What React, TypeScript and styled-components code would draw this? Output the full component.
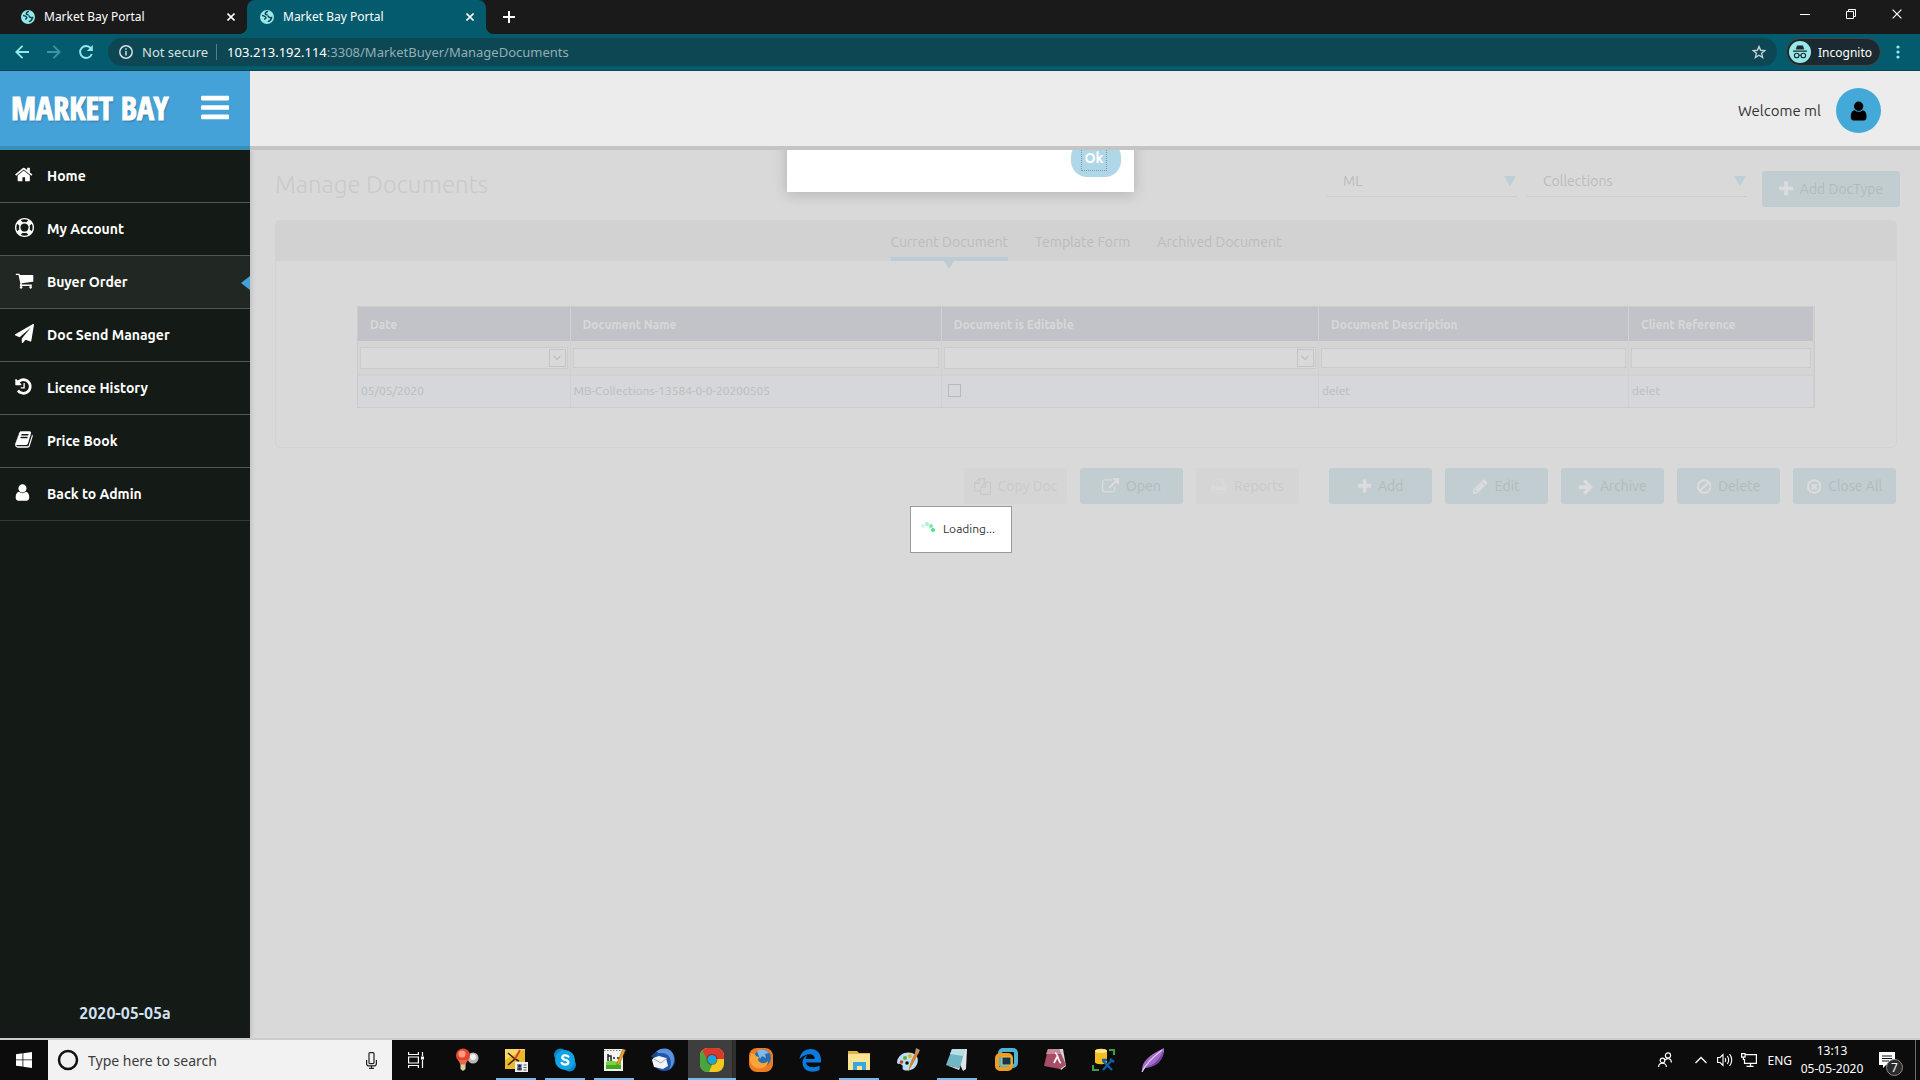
import React from 'react';
import styled, { createGlobalStyle } from 'styled-components';

const GlobalStyle = createGlobalStyle`
  *, *::before, *::after { box-sizing: border-box; }
  body { margin: 0; overflow: hidden; }
  button, input, select { font: inherit; color: inherit; }
  button { cursor: pointer; padding: 0; border: 0; background: none; }
  ul { list-style: none; margin: 0; padding: 0; }
  a { color: inherit; text-decoration: none; }
  svg { display: block; flex: none; }
`;

const uiFont = '"Segoe UI", "Noto Sans", sans-serif';
const siteFont = 'Ubuntu, "Noto Sans", sans-serif';

/* ---------- glyphs: [path, left edge, width] on a 1792-unit grid ---------- */

const glyphs = {
  bars: ['M1664 1344v128q0 26-19 45t-45 19h-1408q-26 0-45-19t-19-45v-128q0-26 19-45t45-19h1408q26 0 45 19t19 45zm0-512v128q0 26-19 45t-45 19h-1408q-26 0-45-19t-19-45v-128q0-26 19-45t45-19h1408q26 0 45 19t19 45zm0-512v128q0 26-19 45t-45 19h-1408q-26 0-45-19t-19-45v-128q0-26 19-45t45-19h1408q26 0 45 19t19 45z', 128, 1536],
  home: ['M1472 992v480q0 26-19 45t-45 19h-384v-384h-256v384h-384q-26 0-45-19t-19-45v-480q0-1 .5-3t.5-3l575-474 575 474q1 2 1 6zm223-69l-62 74q-8 9-21 11h-3q-13 0-21-7l-692-577-692 577q-12 8-24 7-13-2-21-11l-62-74q-8-10-7-23.5t11-21.5l719-599q32-26 76-26t76 26l244 204v-195q0-14 9-23t23-9h192q14 0 23 9t9 23v408l219 182q10 8 11 21.5t-7 23.5z', 70, 1664],
  user: ['M1536 1399q0 109-62.5 187t-150.5 78h-854q-88 0-150.5-78t-62.5-187q0-85 8.5-160.5t31.5-152 58.5-131 94-89 134.5-34.5q131 128 313 128t313-128q76 0 134.5 34.5t94 89 58.5 131 31.5 152 8.5 160.5zm-256-887q0 159-112.5 271.5t-271.5 112.5-271.5-112.5-112.5-271.5 112.5-271.5 271.5-112.5 271.5 112.5 112.5 271.5z', 192, 1408],
  cart: ['M704 1536q0 52-38 90t-90 38-90-38-38-90 38-90 90-38 90 38 38 90zm896 0q0 52-38 90t-90 38-90-38-38-90 38-90 90-38 90 38 38 90zm128-1088v512q0 24-16.5 42.5t-40.5 21.5l-1044 122q13 60 13 70 0 16-24 64h920q26 0 45 19t19 45-19 45-45 19h-1024q-26 0-45-19t-19-45q0-11 8-31.5t16-36 21.5-40 15.5-29.5l-177-823h-204q-26 0-45-19t-19-45 19-45 45-19h256q16 0 28.5 6.5t19.5 15.5 13 24.5 8 26 5.5 29.5 4.5 26h1201q26 0 45 19t19 45z', 0, 1792],
  plane: ['M1764 11q33 24 27 64l-256 1536q-5 29-32 45-14 8-31 8-11 0-24-5l-453-185-242 295q-18 23-49 23-13 0-22-4-19-7-30.5-23.5t-11.5-36.5v-349l864-1059-1069 925-395-162q-37-14-40-55-2-40 32-59l1664-960q15-9 32-9 20 0 36 11z', 0, 1792],
  history: ['M1664 896q0 156-61 298t-164 245-245 164-298 61q-172 0-327-72.5t-264-204.5q-7-10-6.5-22.5t8.5-20.5l137-138q10-9 25-9 16 2 23 12 73 95 179 147t225 52q104 0 198.5-40.5t163.5-109.5 109.5-163.5 40.5-198.5-40.5-198.5-109.5-163.5-163.5-109.5-198.5-40.5q-98 0-188 35.5t-160 101.5l137 138q31 30 14 69-17 40-59 40h-448q-26 0-45-19t-19-45v-448q0-42 40-59 39-17 69 14l130 129q107-101 244.5-156.5t284.5-55.5q156 0 298 61t245 164 164 245 61 298zm-640-288v448q0 14-9 23t-23 9h-320q-14 0-23-9t-9-23v-64q0-14 9-23t23-9h224v-352q0-14 9-23t23-9h64q14 0 23 9t9 23z', 100, 1600],
  ring: ['M896 0q182 0 348 71t286 191 191 286 71 348-71 348-191 286-286 191-348 71-348-71-286-191-191-286-71-348 71-348 191-286 286-191 348-71zm0 128q-190 0-361 90l194 194q82-28 167-28t167 28l194-194q-171-90-361-90zm-678 1129l194-194q-28-82-28-167t28-167l-194-194q-90 171-90 361t90 361zm678 407q190 0 361-90l-194-194q-82 28-167 28t-167-28l-194 194q171 90 361 90zm0-384q159 0 271.5-112.5t112.5-271.5-112.5-271.5-271.5-112.5-271.5 112.5-112.5 271.5 112.5 271.5 271.5 112.5zm484-217l194 194q90-171 90-361t-90-361l-194 194q28 82 28 167t-28 167z', 0, 1792],
  book: ['M1703 478q40 57 18 129l-275 906q-19 64-76.5 107.5t-122.5 43.5h-923q-77 0-148.5-53.5t-99.5-131.5q-24-67-2-127 0-4 3-27t4-37q1-8-3-21.5t-3-19.5q2-11 8-21t16.5-23.5 16.5-23.5q23-38 45-91.5t30-91.5q3-10 .5-30t-.5-28q3-11 17-28t17-23q21-36 42-92t25-90q1-9-2.5-32t.5-28q4-13 22-30.5t22-22.5q19-26 42.5-84.5t27.5-96.5q1-8-3-25.5t-2-26.5q2-8 9-18t18-23 17-21q8-12 16.5-30.5t15-35 16-36 19.5-32 26.5-23.5 36-11.5 47.5 5.5l-1 3q38-9 51-9h761q74 0 114 56t18 130l-274 906q-36 119-71.5 153.5t-128.5 34.5h-869q-27 0-38 15-11 16-1 43 24 70 144 70h923q29 0 56-15.5t35-41.5l300-987q7-22 5-57 38 15 59 43zm-1064 2q-4 13 2 22.5t20 9.5h608q13 0 25.5-9.5t16.5-22.5l21-64q4-13-2-22.5t-20-9.5h-608q-13 0-25.5 9.5t-16.5 22.5zm-83 256q-4 13 2 22.5t20 9.5h608q13 0 25.5-9.5t16.5-22.5l21-64q4-13-2-22.5t-20-9.5h-608q-13 0-25.5 9.5t-16.5 22.5z', 50, 1700],
  plus: ['M1600 736v192q0 40-28 68t-68 28h-416v416q0 40-28 68t-68 28h-192q-40 0-68-28t-28-68v-416h-416q-40 0-68-28t-28-68v-192q0-40 28-68t68-28h416v-416q0-40 28-68t68-28h192q40 0 68 28t28 68v416h416q40 0 68 28t28 68z', 192, 1408],
  pencil: ['M491 1536l91-91-235-235-91 91v107h128v128h107zm523-928q0-22-22-22-10 0-17 7l-542 542q-7 7-7 17 0 22 22 22 10 0 17-7l542-542q7-7 7-17zm-54-192l416 416-832 832h-416v-416zm683 96q0 53-37 90l-166 166-416-416 166-165q36-38 90-38 53 0 91 38l235 234q37 39 37 91z', 128, 1536],
  arrow: ['M1600 960q0 54-37 91l-651 651q-39 37-91 37-51 0-90-37l-75-75q-38-38-38-91t38-91l293-293h-704q-52 0-84.5-37.5t-32.5-90.5v-128q0-53 32.5-90.5t84.5-37.5h704l-293-294q-38-36-38-90t38-90l75-75q38-38 90-38 53 0 91 38l651 651q37 35 37 90z', 64, 1536],
  ban: ['M1440 893q0-161-87-295l-754 753q137 89 297 89 111 0 211.5-43.5t173.5-116.5 116-174.5 43-212.5zm-999 299l755-754q-135-91-300-91-148 0-273 73t-198 199-73 274q0 162 89 299zm1223-299q0 157-61 300t-163.5 246-245 164-298.5 61-298.5-61-245-164-163.5-246-61-300 61-299.5 163.5-245.5 245-164 298.5-61 298.5 61 245 164 163.5 245.5 61 299.5z', 128, 1536],
  close: ['M1225 1111l-146 146q-10 10-23 10t-23-10l-137-137-137 137q-10 10-23 10t-23-10l-146-146q-10-10-10-23t10-23l137-137-137-137q-10-10-10-23t10-23l146-146q10-10 23-10t23 10l137 137 137-137q10-10 23-10t23 10l146 146q10 10 10 23t-10 23l-137 137 137 137q10 10 10 23t-10 23zm215-215q0-148-73-273t-198-198-273-73-273 73-198 198-73 273 73 273 198 198 273 73 273-73 198-198 73-273zm224 0q0 209-103 385.5t-279.5 279.5-385.5 103-385.5-103-279.5-279.5-103-385.5 103-385.5 279.5-279.5 385.5-103 385.5 103 279.5 279.5 103 385.5z', 128, 1536],
  external: ['M1408 928v320q0 119-84.5 203.5t-203.5 84.5h-832q-119 0-203.5-84.5t-84.5-203.5v-832q0-119 84.5-203.5t203.5-84.5h704q14 0 23 9t9 23v64q0 14-9 23t-23 9h-704q-66 0-113 47t-47 113v832q0 66 47 113t113 47h832q66 0 113-47t47-113v-320q0-14 9-23t23-9h64q14 0 23 9t9 23zm384-864v512q0 26-19 45t-45 19-45-19l-176-176-652 652q-10 10-23 10t-23-10l-114-114q-10-10-10-23t10-23l652-652-176-176q-19-19-19-45t19-45 45-19h512q26 0 45 19t19 45z', 0, 1792],
  print: ['M448 1536h896v-256h-896v256zm0-640h896v-384h-160q-40 0-68-28t-28-68v-160h-640v640zm1152 64q0-26-19-45t-45-19-45 19-19 45 19 45 45 19 45-19 19-45zm128 0v416q0 13-9.5 22.5t-22.5 9.5h-224v160q0 40-28 68t-68 28h-960q-40 0-68-28t-28-68v-160h-224q-13 0-22.5-9.5t-9.5-22.5v-416q0-79 56.5-135.5t135.5-56.5h64v-544q0-40 28-68t68-28h672q40 0 88 20t76 48l152 152q28 28 48 76t20 88v256h64q79 0 135.5 56.5t56.5 135.5z', 64, 1664],
  copy: ['M1696 384q40 0 68 28t28 68v1216q0 40-28 68t-68 28h-960q-40 0-68-28t-28-68v-288h-544q-40 0-68-28t-28-68v-672q0-40 20-88t48-76l408-408q28-28 76-48t88-20h416q40 0 68 28t28 68v328q68-40 128-40h416zm-544 213l-299 299h299v-299zm-640-384l-299 299h299v-299zm196 647l316-316v-416h-384v416q0 40-28 68t-68 28h-416v640h512v-256q0-40 20-88t48-76zm956 804v-1152h-384v416q0 40-28 68t-68 28h-416v640h896z', 0, 1792],
} as const;

type GlyphName = keyof typeof glyphs;

const Glyph = ({ name, size }: { name: GlyphName; size: number }) => {
  const [d, x, w] = glyphs[name];
  return (
    <svg height={size} width={(size * w) / 1792} viewBox={`${x} 0 ${w} 1792`} fill="currentColor" aria-hidden>
      <path d={d} />
    </svg>
  );
};

/* ---------- browser chrome ---------- */

const Screen = styled.div`
  display: flex;
  flex-direction: column;
  height: 100vh;
  font-family: ${uiFont};
  background: #d9d9d9;
`;

const TabStrip = styled.div`
  display: flex;
  flex: none;
  height: 34px;
  padding-left: 8px;
  color: #fff;
  background: #1a1a1a;
`;

const BrowserTab = styled.div<{ $active?: boolean }>`
  position: relative;
  display: flex;
  align-items: center;
  gap: 9px;
  width: 239px;
  padding: 0 12px 1px 13px;
  font-size: 12px;
  border-radius: 8px 8px 0 0;
  background: ${(p) => (p.$active ? '#035b6d' : 'transparent')};

  &::before, &::after {
    content: '';
    display: ${(p) => (p.$active ? 'block' : 'none')};
    position: absolute;
    bottom: 0;
    width: 8px;
    height: 8px;
  }
  &::before { left: -8px; background: radial-gradient(circle at 0 0, transparent 8px, #035b6d 8px); }
  &::after { right: -8px; background: radial-gradient(circle at 100% 0, transparent 8px, #035b6d 8px); }
`;

const TabTitle = styled.span`
  flex: 1;
  white-space: nowrap;
`;

const NewTab = styled.button`
  display: grid;
  place-items: center;
  width: 28px;
  margin-left: 9px;
`;

const WindowButtons = styled.div`
  display: flex;
  margin-left: auto;
`;

const WindowButton = styled.button`
  display: grid;
  place-items: center;
  width: 46px;
  height: 28px;
`;

const Toolbar = styled.div`
  display: flex;
  align-items: center;
  flex: none;
  height: 37px;
  padding: 0 20px 0 15px;
  color: #97e8e8;
  background: #035b6d;
  border-bottom: 1px solid #0b4552;
`;

const NavButton = styled.button<{ $faded?: boolean }>`
  width: 14px;
  margin-right: 18px;
  opacity: ${(p) => (p.$faded ? 0.4 : 1)};
`;

const AddressBar = styled.div`
  display: flex;
  align-items: center;
  flex: 1;
  height: 28px;
  margin-left: -3px;
  padding: 0 11px;
  font-size: 13px;
  color: #d5e0e2;
  border-radius: 14px;
  background: #0d4754;
`;

const Security = styled.span`
  margin-left: 9px;
  padding-right: 8px;
  line-height: 16px;
  border-right: 1px solid #557e87;
`;

const Url = styled.span`
  flex: 1;
  margin-left: 10px;
  color: #93aeb4;
  strong { font-weight: 400; color: #fff; }
`;

const Incognito = styled.button`
  display: flex;
  align-items: center;
  gap: 7px;
  height: 28px;
  margin: 0 15px 0 9px;
  padding: 0 8px 0 2px;
  font-size: 12px;
  color: #fff;
  border: 1px solid #43484b;
  border-radius: 14px;
  background: #1b2a31;
`;

/* ---------- site ---------- */

const SiteHeader = styled.header`
  display: flex;
  flex: none;
  height: 79px;
  font-family: ${siteFont};
  background: #ececec;
  border-bottom: 4px solid #c4c4c4;
`;

const Brand = styled.div`
  display: flex;
  align-items: center;
  justify-content: space-between;
  width: 250px;
  height: 79px;
  padding: 0 21px 2px 11px;
  color: #fff;
  background: #45a2d9;
  border-bottom: 4px solid #368fb8;
`;

const BrandName = styled.a`
  font: 700 32px/36px Impact, "Open Sans Condensed", "Liberation Sans Narrow", "Liberation Sans", sans-serif;
  white-space: nowrap;
  -webkit-text-stroke: 1px #fff;
  text-shadow: 1px 2px 2px rgba(0, 0, 0, 0.2);
`;

const Account = styled.div`
  display: flex;
  align-items: center;
  gap: 15px;
  margin-left: auto;
  padding: 4px 39px 0 0;
  font-size: 15px;
  color: #333;
`;

const Avatar = styled.button`
  display: grid;
  place-items: center;
  width: 45px;
  height: 45px;
  color: #000;
  border-radius: 50%;
  background: #42a9d9;
`;

const SiteBody = styled.div`
  position: relative;
  display: flex;
  flex: 1;
  min-height: 0;
  overflow: hidden;
  font-family: ${siteFont};
  border-bottom: 2px solid #cbcbd0;
`;

const Sidebar = styled.nav`
  display: flex;
  flex-direction: column;
  flex: none;
  width: 250px;
  color: #fff;
  background: #141a16;
  box-shadow: 1px 0 5px rgba(0, 0, 0, 0.15);
`;

const MenuLink = styled.a<{ $active?: boolean }>`
  position: relative;
  display: grid;
  grid-template-columns: 32px 1fr;
  align-items: center;
  height: 53px;
  padding-left: 15px;
  font-size: 14px;
  font-weight: 600;
  background: ${(p) => (p.$active ? '#212723' : 'transparent')};
  border-bottom: 1px solid #4e5955;

  svg { margin-bottom: 3px; }

  &::after {
    content: '';
    display: ${(p) => (p.$active ? 'block' : 'none')};
    position: absolute;
    right: 0;
    top: 20px;
    border: solid transparent;
    border-width: 7px 9px 7px 0;
    border-right-color: #45a2d9;
  }
`;

const MenuItem = styled.li`
  &:last-child a { border-bottom-color: #33383c; }
`;

const Version = styled.p`
  margin: auto 0 14px;
  font-size: 16px;
  line-height: 22px;
  font-weight: 600;
  text-align: center;
  color: #d3e3f3;
`;

const Main = styled.main`
  flex: 1;
  min-width: 0;
  padding: 16px 20px 0 25px;
  color: #bcbcbc;
`;

const TitleRow = styled.div`
  display: flex;
  align-items: flex-start;
  height: 54px;
`;

const Title = styled.h1`
  flex: 1;
  margin: 0;
  font-size: 24px;
  line-height: 38px;
  font-weight: 300;
  color: #cacaca;
`;

const Picker = styled.label<{ $width: number }>`
  display: flex;
  align-items: center;
  width: ${(p) => p.$width}px;
  height: 31px;
  margin-right: 10px;
  padding: 0 1px 0 16px;
  font-size: 14px;
  border-bottom: 1px solid #cdcdcd;

  select {
    flex: 1;
    min-width: 0;
    padding: 0;
    border: 0;
    appearance: none;
    background: none;
  }
  &::after {
    content: '';
    border: solid transparent;
    border-width: 10px 6px 0;
    border-top-color: #bccfd6;
  }
`;

const ActionButton = styled.button<{ $wide?: boolean; $pale?: boolean }>`
  display: flex;
  align-items: center;
  justify-content: center;
  gap: 7px;
  width: ${(p) => (p.$wide ? 138 : 103)}px;
  height: 36px;
  font-size: 14px;
  color: #b5babb;
  border-radius: 3px;
  background: #c1cdd1;
  white-space: nowrap;

  svg { color: #dcdcdc; }
  &:disabled {
    color: #cacaca;
    background: #d5d5d5;
  }
  &:disabled svg { color: ${(p) => (p.$pale ? '#dadada' : '#c8c8c8')}; }
`;

const AddTypeSlot = styled.div`
  padding: 5px 0 0 5px;
`;

const Panel = styled.section`
  margin-right: 3px;
  border: 1px solid #d2d2d2;
  border-radius: 6px;
`;

const PanelTabs = styled.div`
  display: flex;
  justify-content: center;
  gap: 27px;
  height: 40px;
  background: #d2d2d2;
`;

const PanelTab = styled.button<{ $active?: boolean }>`
  position: relative;
  padding-top: 5px;
  font-size: 14px;
  color: #bcbcbc;
  border-bottom: 4px solid ${(p) => (p.$active ? '#becbd4' : 'transparent')};

  &::after {
    content: '';
    display: ${(p) => (p.$active ? 'block' : 'none')};
    position: absolute;
    top: 40px;
    left: calc(50% - 5px);
    border: solid transparent;
    border-width: 8px 5px 0;
    border-top-color: #becbd4;
  }
`;

const GridWrap = styled.div`
  padding: 45px 81px 39px;
`;

const DataTable = styled.table`
  width: 100%;
  table-layout: fixed;
  border-collapse: separate;
  border-spacing: 0;
  border: 1px solid #cbcbcb;
  font-size: 12px;
  color: #bcbcbc;
`;

const HeadCell = styled.th<{ $share: number }>`
  width: ${(p) => p.$share}%;
  height: 34px;
  padding: 0 12px;
  text-align: left;
  font-weight: 600;
  color: #d8d8d8;
  background: #c2c3c8;
  border-right: 1px solid #d2d2d4;
`;

const FilterCell = styled.td`
  height: 35px;
  padding: 0 2px;
  background: #d5d5d5;
  border-right: 1px solid #cfd0d1;
  border-bottom: 2px solid #d1d1d1;
`;

const FilterBox = styled.div<{ $drop?: boolean }>`
  display: flex;
  height: ${(p) => (p.$drop ? 22 : 20)}px;
  padding: 1px;
  border: 1px solid #cbcbcb;
  background: #d9d9d9;

  input, select {
    flex: 1;
    min-width: 0;
    padding: 0 4px;
    border: 0;
    outline: 0;
    appearance: none;
    background: none;
  }
`;

const DropMark = styled.span`
  display: grid;
  place-items: center;
  width: 17px;
  color: #bebebe;
  border: 1px solid #c4c4c4;
`;

const DataCell = styled.td`
  height: 31px;
  padding: 0 3px 2px;
  line-height: 16px;
  background: #d5d7da;
  border-right: 1px solid #cfd0d1;

  input {
    appearance: none;
    display: block;
    width: 13px;
    height: 13px;
    margin: 0 0 0 3px;
    border: 1px solid #b9b9b9;
  }
`;

const Actions = styled.div`
  display: flex;
  justify-content: flex-end;
  gap: 30px;
  margin: 20px 4px 0 0;
`;

const ActionGroup = styled.div`
  display: flex;
  gap: 13px;
`;

const Dialog = styled.div`
  position: absolute;
  top: -80px;
  left: 50%;
  display: flex;
  align-items: flex-end;
  justify-content: flex-end;
  width: 347px;
  height: 122px;
  margin-left: -173px;
  padding: 0 13px 15px;
  background: #fff;
  box-shadow: 0 2px 14px rgba(0, 0, 0, 0.18);
`;

const OkButton = styled.button`
  width: 50px;
  height: 36px;
  padding: 0 14px 2px 10px;
  font-size: 14px;
  font-weight: 700;
  color: #fff;
  border-radius: 16px;
  background: #b0d7e8;

  span {
    display: block;
    line-height: 24px;
    border: 1px dotted #7d98a3;
  }
`;

const Loading = styled.div`
  position: absolute;
  top: 356px;
  left: 50%;
  display: flex;
  align-items: center;
  gap: 6px;
  width: 102px;
  height: 47px;
  margin-left: -50px;
  padding: 0 0 2px 10px;
  font-size: 12px;
  color: #333;
  background: #fff;
  border: 1px solid #9a9a9a;
`;

/* ---------- taskbar ---------- */

const Taskbar = styled.footer`
  display: flex;
  flex: none;
  height: 40px;
  color: #fff;
  background: #0c0c0c;
`;

const StartButton = styled.button`
  display: grid;
  place-items: center;
  width: 48px;
`;

const SearchBox = styled.label`
  display: flex;
  align-items: center;
  gap: 9px;
  width: 344px;
  padding: 0 15px 0 9px;
  font-size: 14px;
  color: #3c3c3c;
  background: #f2f2f2;

  input {
    flex: 1;
    min-width: 0;
    padding: 0;
    border: 0;
    outline: 0;
    background: none;
  }
  input::placeholder { color: #3c3c3c; opacity: 1; }
`;

const TaskButton = styled.button<{ $open?: boolean; $current?: boolean }>`
  display: grid;
  place-items: center;
  width: ${(p) => (p.$current ? 48 : 40)}px;
  margin: ${(p) => (p.$current ? '0 -4px 0 5px' : '0 0 0 9px')};
  padding-top: ${(p) => (p.$open ? 2 : 0)}px;
  border-bottom: ${(p) => (p.$open ? '2px solid #76b9ed' : '0')};
  background: ${(p) => (p.$current ? 'linear-gradient(90deg, #3e3e3e 44px, #222 44px, #2f2f2f 45px)' : 'none')};
`;

const TaskView = styled(TaskButton)`
  margin: 0 0 0 4px;
`;

const TaskList = styled.div`
  display: flex;
  margin-left: 2px;
`;

const Tray = styled.div`
  display: flex;
  align-items: center;
  margin-left: auto;
  font-size: 12px;
`;

const TrayButton = styled.button<{ $gap: number }>`
  margin-right: ${(p) => p.$gap}px;
`;

const Clock = styled.div`
  width: 64px;
  margin-right: 15px;
  line-height: 18px;
  text-align: center;
`;

const Notices = styled.button`
  position: relative;
  width: 26px;
  margin-right: 10px;
`;

const NoticeCount = styled.span`
  position: absolute;
  left: 7px;
  top: 7px;
  width: 17px;
  height: 17px;
  font-size: 12px;
  line-height: 15px;
  border: 1px solid #8a8a8a;
  border-radius: 50%;
  background: #2b2b2b;
`;

const ShowDesktop = styled.button`
  align-self: stretch;
  width: 5px;
  border-left: 1px solid #6d6d6d;
`;

/* ---------- small drawings ---------- */

const Globe = () => (
  <svg width="14" height="14" viewBox="0 0 14 14" aria-hidden>
    <circle cx="7" cy="7" r="7" fill="#97e8e8" />
    <path d="M8 1.600C6 1.800 4.800 3 5.400 4.200L7.600 5M2 5.600c1.600 0 2.600.6 3.600 1.400M8.200 5.400c-.4 1.600 1 2.400 3.400 2.200-.4 2-1.800 3.400-3.800 4M5.600 7c.8 1.400-.4 2-1.400 2.200" fill="none" stroke="#0d4754" strokeWidth="1.500" />
  </svg>
);

const Cross = ({ size = 8, width = 1.6 }: { size?: number; width?: number }) => (
  <svg width={size} height={size} viewBox="0 0 8 8" stroke="#fff" strokeWidth={width} aria-hidden>
    <path d="M.5.5l7 7M7.5.5l-7 7" />
  </svg>
);

const Chevron = () => (
  <svg width="8" height="6" viewBox="0 0 8 6" fill="none" stroke="currentColor" strokeWidth="1.3" aria-hidden>
    <path d="M.7 1 4 4.6 7.3 1" />
  </svg>
);

const Spinner = () => (
  <svg width="16" height="16" viewBox="0 0 16 16" fill="#4be08e" aria-hidden>
    <circle cx="2" cy="5" r="2" opacity=".25" />
    <circle cx="6" cy="3" r="2" opacity=".45" />
    <circle cx="10" cy="5" r="2" opacity=".75" />
    <circle cx="12" cy="9" r="2" />
  </svg>
);

const I = ({ children }: { children: React.ReactNode }) => (
  <svg width="24" height="24" viewBox="0 0 24 24" aria-hidden>{children}</svg>
);

const tasks: { name: string; open?: boolean; current?: boolean; art: React.ReactNode }[] = [
  { name: 'Hints', art: <I>
    <circle cx="18" cy="10" r="5.500" fill="#b9b9b9" /><circle cx="18" cy="9" r="3" fill="#f2f2f2" />
    <circle cx="8" cy="7.500" r="7" fill="#e2472d" /><circle cx="7" cy="6" r="3.600" fill="#ff9c82" />
    <path d="M3.500 12h9l-2 5h-5z" fill="#e8694a" /><path d="M5.500 16.500h5V21L8 23l-2.500-2z" fill="#d9cf9c" /></I> },
  { name: 'Organizer', open: true, art: <I>
    <path d="M1 1h20v20H1z" fill="#e9b92c" /><path d="M1 1h20L1 12z" fill="#f5d867" />
    <path d="m4 5 7 6M4 17l7-6 4 2" stroke="#30230a" strokeWidth="1.500" fill="none" /><path d="m11 11 5-9" stroke="#e5352b" strokeWidth="1.800" />
    <path d="M11 14h13v10H11z" fill="#f1f1f1" /><path d="M13 16h5v6h-5z" fill="#8098b5" /><circle cx="15.500" cy="18" r="1.500" fill="#1d2b40" /><path d="M13.500 22c0-3 4-3 4 0zM19.500 17h3M19.500 19.500h3M19.500 22h3" stroke="#555" fill="#1d2b40" /></I> },
  { name: 'Skype', open: true, art: <I>
    <circle cx="7.500" cy="7" r="6.500" fill="#0a87c9" /><circle cx="16.500" cy="17" r="6.500" fill="#0a87c9" /><circle cx="12" cy="12" r="10" fill="#12a5e6" />
    <path d="M15.300 8.600C14 7 9.300 6.800 9.300 9.500c0 3.200 6 1.600 6 4.800 0 2.900-5 2.800-6.600.7" stroke="#fff" strokeWidth="2.300" fill="none" strokeLinecap="round" /></I> },
  { name: 'Notes', open: true, art: <I>
    <path d="M2 1h19v22H2z" fill="#f4f4f0" /><path d="M4 14c5-3 10 1 15-1v8H4z" fill="#7ed043" /><path d="M4 17h15v4H4z" fill="#3fab1c" />
    <path d="M2 2.500h18" stroke="#777" strokeDasharray="1.500 1.500" /><path d="M6 6v7M6 8h3v5M11 10h2M15 10h3" stroke="#222" strokeWidth="1.500" fill="none" />
    <path d="m15 15 6-14 2.500 1-6 13.500-2.500 2z" fill="#efa62c" stroke="#8a5a12" strokeWidth=".6" /></I> },
  { name: 'Thunderbird', art: <I>
    <circle cx="13" cy="12" r="11" fill="#2256a8" /><path d="M4 5C9-1 19-1 22 6c2 5 1 12-4 16 3-5 3-13-3-16C11 4 7 6 4 5z" fill="#5b93dc" />
    <path d="M1 12c2-3 4-3 7-4l7 2 2 8-5 3-9-2z" fill="#f3f5f8" /><path d="m3 11 7 4 6-5" stroke="#9aa8bb" fill="none" /><path d="M0 9c1-3 4-5 7-5L5 9z" fill="#1c4588" /></I> },
  { name: 'Chrome', current: true, open: true, art: <I>
    <rect x="0" y="0" width="24" height="24" rx="8" fill="#f4c91d" />
    <path d="M2 3C4 0 7 0 9 0h7c5 0 8 3 8 8v3H12L7 13z" fill="#d93a30" /><path d="M2.500 3 8 13l4 4-3 7H8c-5 0-8-3-8-8V8c0-2 1-4 2.500-5z" fill="#4aa53c" />
    <circle cx="12" cy="11.500" r="5.500" fill="#222" opacity=".5" /><circle cx="12" cy="11.500" r="4.500" fill="#19a6de" /></I> },
  { name: 'Firefox', art: <I>
    <rect width="24" height="24" rx="8" fill="#ee7b22" /><circle cx="13.500" cy="10" r="8.500" fill="#2a6cb0" /><path d="M8 3c4-3 10-1 12 2l-4 1 1 4-4-2-2 3z" fill="#7fb9e6" />
    <path d="M2 5c2 0 4 1 5 3l3 1-1 3c2 4 7 4 10 1 0 5-5 8-10 7-5 0-8-5-8-9z" fill="#f9a53a" /></I> },
  { name: 'Edge', art: <I>
    <path d="M1.500 11C2.500 4.500 7 1 12.500 1 19 1 23 5.500 23 12v2.500H8c.3 5 8.500 6 13.500 3V22c-7 3.500-17 1.500-17-7.500 0-3.500 2-6 5-7.500-1 1-1.600 2.400-1.800 4h9C17 5 8 4.500 1.500 11z" fill="#0a7bdc" /></I> },
  { name: 'File Explorer', open: true, art: <I>
    <path d="M1 3h9l2 2h11v17H1z" fill="#e3b341" /><path d="M1 6h22v16H1z" fill="#fde394" /><path d="M6 22v-8h13v8h-4v-4h-5v4z" fill="#35a8e0" /></I> },
  { name: 'Paint', art: <I>
    <path d="M1 14C2 6 10 3 16 5c7 2 7 9 4 13-3 5-10 5-12 4-3-1 0-4-2-5-2-2-5 0-5-3z" fill="#b9dff0" />
    <circle cx="9" cy="10" r="2" fill="#59b23c" /><circle cx="14" cy="8" r="2" fill="#e0b52d" /><circle cx="5.500" cy="14" r="1.800" fill="#cf3b2e" /><circle cx="11" cy="15" r="1.800" fill="#111" />
    <path d="m12 24 3-11 5-10 3 1-5 10z" fill="#d9812a" /><path d="m19 5 1-5 4 2-2 4z" fill="#b99265" /></I> },
  { name: 'Notepad', open: true, art: <I>
    <path d="M8 1h14l-1 20-3 2z" fill="#dfe5e6" /><path d="M7 1h13l-5 19-14-3z" fill="#6fb7c4" /><path d="M7 1h13l-2 7L5 6z" fill="#b9dfe4" /><path d="m1 17 14 3-1 2z" fill="#d5dcde" /></I> },
  { name: 'Virtual machines', art: <I>
    <rect x="6" y="2" width="16" height="16" rx="3" fill="none" stroke="#4fb3d6" strokeWidth="4" /><rect x="3" y="7" width="14" height="14" rx="3" fill="none" stroke="#f09d1e" strokeWidth="4" /><path d="M8 9h9v8H8z" fill="#173445" stroke="#e8c24d" /></I> },
  { name: 'Console', art: <I>
    <path d="M8 1h12l3 17-5 4z" fill="#d8d4d6" /><path d="M5 1h11l7 16-6 4L1 18z" fill="#a74d66" /><path d="M5 1h11l2 5H3z" fill="#c98a9a" /><path d="M12 5c3 0 3 9 6 10M14 9l-3 6" stroke="#fff" strokeWidth="1.700" fill="none" /></I> },
  { name: 'Database tools', art: <I>
    <path d="M3 3c0-3 12-3 12 0v11c0 3-12 3-12 0z" fill="#f3bd24" /><ellipse cx="9" cy="3" rx="6" ry="2" fill="#ffe58b" />
    <path d="M17 2h5v5M1 17v5h6" stroke="#3f9b45" strokeWidth="2.200" fill="none" /><path d="m11 22 9-10M11 13l9 9M10 12h5M18 11l4 3" stroke="#0f5fa6" strokeWidth="2.400" fill="none" /></I> },
  { name: 'Feather', art: <I>
    <path d="M1 24C0 14 8 7 23 0c1 9-6 19-19 20z" fill="#a56cc9" /><path d="M5 19c9-2 15-9 17-17 1 9-6 18-17 17z" fill="#7b3fa5" /><path d="M1 24C5 15 12 9 21 2" stroke="#e3cdf0" strokeWidth="1.200" fill="none" /></I> },
];

const menu: { label: string; icon: GlyphName; active?: boolean }[] = [
  { label: 'Home', icon: 'home' },
  { label: 'My Account', icon: 'ring' },
  { label: 'Buyer Order', icon: 'cart', active: true },
  { label: 'Doc Send Manager', icon: 'plane' },
  { label: 'Licence History', icon: 'history' },
  { label: 'Price Book', icon: 'book' },
  { label: 'Back to Admin', icon: 'user' },
];

const columns: { label: string; share: number; drop?: 'date' | 'list' }[] = [
  { label: 'Date', share: 14.6, drop: 'date' },
  { label: 'Document Name', share: 25.5 },
  { label: 'Document is Editable', share: 25.9, drop: 'list' },
  { label: 'Document Description', share: 21.3 },
  { label: 'Client Reference', share: 12.7 },
];

const actionGroups: { label: string; icon: GlyphName; off?: boolean }[][] = [
  [
    { label: 'Copy Doc', icon: 'copy', off: true },
    { label: 'Open', icon: 'external' },
    { label: 'Reports', icon: 'print', off: true },
  ],
  [
    { label: 'Add', icon: 'plus' },
    { label: 'Edit', icon: 'pencil' },
    { label: 'Archive', icon: 'arrow' },
    { label: 'Delete', icon: 'ban' },
    { label: 'Close All', icon: 'close' },
  ],
];

const Browser = () => (
  <>
    <TabStrip>
      {[false, true].map((active) => (
        <BrowserTab key={String(active)} $active={active}>
          <Globe />
          <TabTitle>Market Bay Portal</TabTitle>
          <button aria-label="Close tab"><Cross /></button>
        </BrowserTab>
      ))}
      <NewTab aria-label="New tab">
        <svg width="12" height="12" viewBox="0 0 12 12" stroke="#fff" strokeWidth="2"><path d="M6 0v12M0 6h12" /></svg>
      </NewTab>
      <WindowButtons>
        <WindowButton aria-label="Minimize">
          <svg width="10" height="10" viewBox="0 0 10 10" stroke="#fff"><path d="M0 5.500h10" /></svg>
        </WindowButton>
        <WindowButton aria-label="Restore">
          <svg width="10" height="10" viewBox="0 0 10 10" stroke="#fff" fill="none"><path d="M.5 2.500h7v7h-7zM2.500 2.500v-2h7v7h-2" /></svg>
        </WindowButton>
        <WindowButton aria-label="Close"><Cross size={10} width={1} /></WindowButton>
      </WindowButtons>
    </TabStrip>
    <Toolbar>
      <NavButton aria-label="Back">
        <svg width="14" height="14" viewBox="0 0 14 14" fill="none" stroke="currentColor" strokeWidth="1.800"><path d="M14 7H1.500M7.500.8 1.300 7l6.200 6.200" /></svg>
      </NavButton>
      <NavButton aria-label="Forward" $faded>
        <svg width="14" height="14" viewBox="0 0 14 14" fill="none" stroke="currentColor" strokeWidth="1.800"><path d="M0 7h12.500M6.500.8 12.700 7l-6.200 6.200" /></svg>
      </NavButton>
      <NavButton aria-label="Reload">
        <svg width="14" height="14" viewBox="0 0 14 14"><path d="M11.800 3.200A6 6 0 1 0 12.800 9" fill="none" stroke="currentColor" strokeWidth="1.900" /><path d="M13.800 0v6H7.800z" fill="currentColor" /></svg>
      </NavButton>
      <AddressBar>
        <svg width="14" height="14" viewBox="0 0 14 14" fill="none" stroke="currentColor" strokeWidth="1.500"><circle cx="7" cy="7" r="6.200" /><path d="M7 6v4.500M7 3.200v1.600" /></svg>
        <Security>Not secure</Security>
        <Url><strong>103.213.192.114</strong>:3308/MarketBuyer/ManageDocuments</Url>
        <button aria-label="Bookmark this page">
          <svg width="14" height="14" viewBox="0 0 14 14" fill="none" stroke="#c3cfd1" strokeWidth="1.400"><path d="m7 1.500 1.600 3.800 4.200.3-3.200 2.700 1 4.100L7 10.200l-3.600 2.200 1-4.100L1.200 5.600l4.200-.3z" /></svg>
        </button>
      </AddressBar>
      <Incognito>
        <svg width="22" height="22" viewBox="0 0 22 22"><circle cx="11" cy="11" r="11" fill="#97e8e8" /><path d="M8 4.500h6l1.200 4H6.800zM4 9.600h14v1.200H4z" fill="#1b2a31" /><g fill="none" stroke="#1b2a31" strokeWidth="1.100"><circle cx="7.700" cy="14.500" r="2.300" /><circle cx="14.300" cy="14.500" r="2.300" /><path d="M10 14.200h2" /></g></svg>
        Incognito
      </Incognito>
      <button aria-label="Menu">
        <svg width="4" height="14" viewBox="0 0 4 14" fill="currentColor"><circle cx="2" cy="2" r="1.600" /><circle cx="2" cy="7" r="1.600" /><circle cx="2" cy="12" r="1.600" /></svg>
      </button>
    </Toolbar>
  </>
);

const Documents = () => (
  <Main>
    <TitleRow>
      <Title>Manage Documents</Title>
      <Picker $width={190}>
        <select aria-label="Client" defaultValue="ML"><option>ML</option></select>
      </Picker>
      <Picker $width={220}>
        <select aria-label="Document type" defaultValue="Collections"><option>Collections</option></select>
      </Picker>
      <AddTypeSlot>
        <ActionButton $wide><Glyph name="plus" size={18} />Add DocType</ActionButton>
      </AddTypeSlot>
    </TitleRow>
    <Panel>
      <PanelTabs role="tablist">
        <PanelTab role="tab" aria-selected $active>Current Document</PanelTab>
        <PanelTab role="tab">Template Form</PanelTab>
        <PanelTab role="tab">Archived Document</PanelTab>
      </PanelTabs>
      <GridWrap>
        <DataTable>
          <thead>
            <tr>{columns.map((c) => <HeadCell key={c.label} $share={c.share}>{c.label}</HeadCell>)}</tr>
          </thead>
          <tbody>
            <tr>
              {columns.map((c) => (
                <FilterCell key={c.label}>
                  <FilterBox $drop={!!c.drop}>
                    {c.drop === 'list' ? <select aria-label={c.label} /> : <input aria-label={c.label} />}
                    {c.drop && <DropMark><Chevron /></DropMark>}
                  </FilterBox>
                </FilterCell>
              ))}
            </tr>
            <tr>
              <DataCell>05/05/2020</DataCell>
              <DataCell>MB-Collections-13584-0-0-20200505</DataCell>
              <DataCell><input type="checkbox" aria-label="Document is Editable" /></DataCell>
              <DataCell>delet</DataCell>
              <DataCell>delet</DataCell>
            </tr>
          </tbody>
        </DataTable>
      </GridWrap>
    </Panel>
    <Actions>
      {actionGroups.map((group, i) => (
        <ActionGroup key={i}>
          {group.map((a) => (
            <ActionButton key={a.label} disabled={a.off} $pale={a.icon === 'print'}>
              <Glyph name={a.icon} size={17} />{a.label}
            </ActionButton>
          ))}
        </ActionGroup>
      ))}
    </Actions>
  </Main>
);

const TaskbarRow = () => (
  <Taskbar>
    <StartButton aria-label="Start">
      <svg width="16" height="16" viewBox="0 0 16 16" fill="#fff"><path d="M0 2.200 6.500 1.300v6.200H0zM7.300 1.200 16 0v7.500H7.300zM0 8.300h6.500v6.300L0 13.700zM7.300 8.300H16V16l-8.700-1.200z" /></svg>
    </StartButton>
    <SearchBox>
      <svg width="22" height="22" viewBox="0 0 22 22" fill="none" stroke="#111" strokeWidth="2.500"><circle cx="11" cy="11" r="9" /></svg>
      <input aria-label="Search" placeholder="Type here to search" />
      <svg width="11" height="17" viewBox="0 0 11 17" fill="none" stroke="#222" strokeWidth="1.200"><rect x="3" y=".6" width="5" height="11" rx="1" /><path d="M.6 8v3.400q0 2.500 2.500 2.500h4.800q2.500 0 2.500-2.500V8M5.500 14v2.400M3 16.400h5" /></svg>
    </SearchBox>
    <TaskView aria-label="Task View">
      <svg width="16" height="16" viewBox="0 0 16 16" fill="none" stroke="#fff" strokeWidth="1.200"><path d="M.6 0v2.500h9.800V0M.6 5h9.800v6H.6zM.6 16v-2.500h9.800V16M14.500 0v4M14.500 8v8" /><path d="M13 4.500h3v3h-3z" fill="#fff" stroke="none" /></svg>
    </TaskView>
    <TaskList>
      {tasks.map((t) => (
        <TaskButton key={t.name} aria-label={t.name} $open={t.open} $current={t.current}>{t.art}</TaskButton>
      ))}
    </TaskList>
    <Tray>
      <TrayButton aria-label="People" $gap={23}>
        <svg width="14" height="16" viewBox="0 0 14 16" fill="none" stroke="#fff" strokeWidth="1.200"><circle cx="10" cy="3.400" r="2.600" /><circle cx="4.500" cy="8.500" r="2.300" /><path d="M.6 15c0-5 7.800-5 7.800 0M7 8.200c2-2.600 6.400-2 6.400 2.300" /></svg>
      </TrayButton>
      <TrayButton aria-label="Hidden icons" $gap={10}>
        <svg width="12" height="8" viewBox="0 0 12 8" fill="none" stroke="#fff" strokeWidth="1.300"><path d="M.5 7 6 1.500 11.500 7" /></svg>
      </TrayButton>
      <TrayButton aria-label="Volume" $gap={8}>
        <svg width="16" height="14" viewBox="0 0 16 14" fill="none" stroke="#fff" strokeWidth="1.100"><path d="M.6 4.500h2.500L6 1.500v11l-2.900-3H.6zM8 5q1.400 2 0 4M10.300 3q2.800 4 0 8M12.600 1.200q4.300 5.800 0 11.600" /></svg>
      </TrayButton>
      <TrayButton aria-label="Network" $gap={10}>
        <svg width="16" height="14" viewBox="0 0 16 14" fill="none" stroke="#fff" strokeWidth="1.200"><path d="M4 1.600h11.400v8.800H3.500V6M9.500 10.500v3M5.500 13.400h7M.6.6h3.500v3.500H.6zM2.400 4v3" /></svg>
      </TrayButton>
      <TrayButton $gap={8}>ENG</TrayButton>
      <Clock>13:13<br />05-05-2020</Clock>
      <Notices aria-label="Notifications">
        <svg width="16" height="16" viewBox="0 0 16 16"><path d="M0 0h16v13H7l-3 3v-3H0z" fill="#fff" /><path d="M3 4h10M3 6.500h10M3 9h7" stroke="#111" /></svg>
        <NoticeCount>7</NoticeCount>
      </Notices>
      <ShowDesktop aria-label="Show desktop" />
    </Tray>
  </Taskbar>
);

export default function App() {
  return (
    <Screen>
      <GlobalStyle />
      <Browser />
      <SiteHeader>
        <Brand>
          <BrandName href="#">MARKET BAY</BrandName>
          <button aria-label="Toggle menu"><Glyph name="bars" size={33} /></button>
        </Brand>
        <Account>
          Welcome ml
          <Avatar aria-label="Account"><Glyph name="user" size={22} /></Avatar>
        </Account>
      </SiteHeader>
      <SiteBody>
        <Sidebar>
          <ul>
            {menu.map((m) => (
              <MenuItem key={m.label}>
                <MenuLink href="#" $active={m.active}><Glyph name={m.icon} size={19} />{m.label}</MenuLink>
              </MenuItem>
            ))}
          </ul>
          <Version>2020-05-05a</Version>
        </Sidebar>
        <Documents />
        <Dialog role="dialog" aria-label="Message">
          <OkButton><span>Ok</span></OkButton>
        </Dialog>
        <Loading role="status"><Spinner />Loading...</Loading>
      </SiteBody>
      <TaskbarRow />
    </Screen>
  );
}
